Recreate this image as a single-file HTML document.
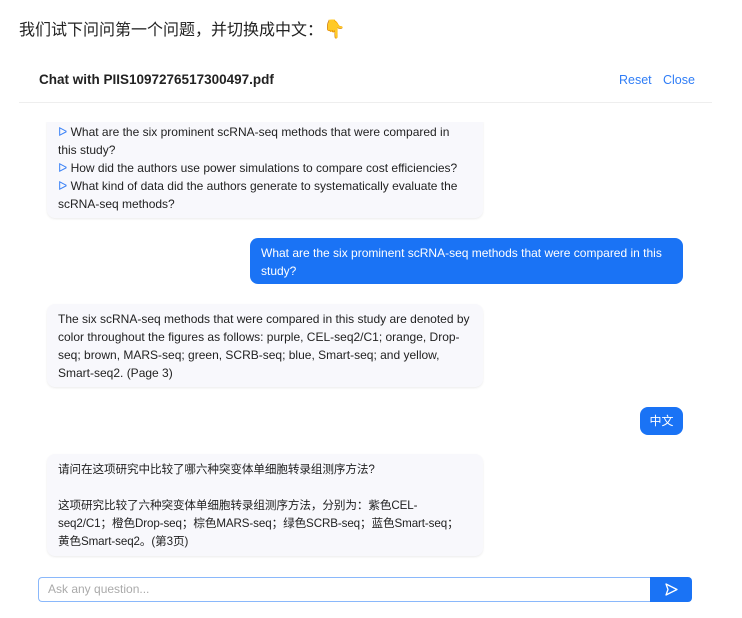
<!DOCTYPE html>
<html><head><meta charset="utf-8"><style>
body{margin:0;width:742px;height:618px;background:#fff;font-family:"Liberation Sans","Noto Sans CJK SC",sans-serif;position:relative;overflow:hidden;color:#222}
.a{position:absolute}
.bub{position:absolute;background:#f8f8fc;border-radius:8px;box-shadow:0 1px 2px rgba(0,0,0,.08);font-size:12px;line-height:18px;padding:9px 4px 9px 11px;box-sizing:border-box;color:#222;white-space:nowrap}
.me{position:absolute;background:#1a73f5;color:#fff;border-radius:8px;font-size:12px;line-height:18px;padding:5px 11px;box-sizing:border-box;white-space:nowrap}
.tri{color:#3b82f6}
</style></head><body>
<div class="a" style="left:19px;top:16px;font-size:16px;color:#222">我们试下问问第一个问题，并切换成中文：<span style="font-size:18px">👇</span></div>
<div class="a" style="left:39px;top:72px;font-size:13.5px;font-weight:bold;color:#222">Chat with PIIS1097276517300497.pdf</div>
<div class="a" style="left:619px;top:73px;font-size:12.5px;color:#2f7df6">Reset</div>
<div class="a" style="left:663px;top:73px;font-size:12.5px;color:#2f7df6">Close</div>
<div class="a" style="left:19px;top:102px;width:693px;height:1px;background:#eee"></div>
<div class="bub" style="left:47px;top:114px;width:436px;height:104px;padding-top:9px;clip-path:inset(8px -4px -4px -4px)"><span class="tri">ᐅ</span> What are the six prominent scRNA-seq methods that were compared in<br>this study?<br><span class="tri">ᐅ</span> How did the authors use power simulations to compare cost efficiencies?<br><span class="tri">ᐅ</span> What kind of data did the authors generate to systematically evaluate the<br>scRNA-seq methods?</div>
<div class="me" style="left:250px;top:238px;width:433px;height:46px;padding-top:6px">What are the six prominent scRNA-seq methods that were compared in this<br>study?</div>
<div class="bub" style="left:47px;top:304px;width:436px;height:83px;padding-top:6px">The six scRNA-seq methods that were compared in this study are denoted by<br>color throughout the figures as follows: purple, CEL-seq2/C1; orange, Drop-<br>seq; brown, MARS-seq; green, SCRB-seq; blue, Smart-seq; and yellow,<br>Smart-seq2. (Page 3)</div>
<div class="me" style="left:640px;top:407px;width:43px;height:28px;padding:5px 0;text-align:center">中文</div>
<div class="bub" style="left:47px;top:454px;width:436px;height:102px;padding-top:7px;font-size:11.6px;letter-spacing:-0.1px">请问在这项研究中比较了哪六种突变体单细胞转录组测序方法?<br><br>这项研究比较了六种突变体单细胞转录组测序方法，分别为：紫色CEL-<br>seq2/C1；橙色Drop-seq；棕色MARS-seq；绿色SCRB-seq；蓝色Smart-seq；<br>黄色Smart-seq2。(第3页)</div>
<div class="a" style="left:38px;top:577px;width:613px;height:25px;border:1px solid #8ab8fb;border-right:none;border-radius:4px 0 0 4px;box-sizing:border-box;font-size:12px;line-height:23px;color:#aaa;padding-left:9px">Ask any question...</div>
<div class="a" style="left:650px;top:577px;width:42px;height:25px;background:#1a73f5;border-radius:0 4px 4px 0"><svg width="42" height="25"><path d="M16 7 L27 12.5 L16 18 L18 12.5 Z" fill="none" stroke="#fff" stroke-width="1.3" stroke-linejoin="round"/></svg></div>
</body></html>
